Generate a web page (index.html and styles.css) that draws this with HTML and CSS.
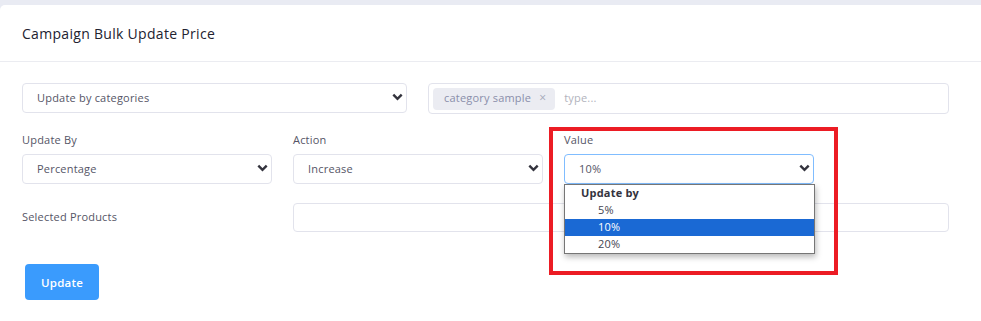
FILE: index.html
```html
<!DOCTYPE html>
<html lang="en">

<head>
    <meta charset="UTF-8">
    <meta name="viewport" content="width=device-width, initial-scale=1.0">
    <title>Campaign Bulk Update Price</title>
    <link rel="stylesheet" href="styles.css">
</head>

<body>
    <div class="card">
        <div class="card-header">
            <h5 class="card-title">Campaign Bulk Update Price</h5>
        </div>
        <div class="card-body">
            <div class="row row-top">
                <div class="select">
                    <span>Update by categories</span>
                    <svg class="chevron" viewBox="0 0 10 7"><path d="M1.2 1.3 5 5.1 8.8 1.3" /></svg>
                </div>
                <div class="tag-input">
                    <span class="tag">category sample <span class="tag-x">&times;</span></span>
                    <span class="placeholder">type...</span>
                </div>
            </div>

            <div class="row row-three">
                <div class="field">
                    <label class="label">Update By</label>
                    <div class="select">
                        <span>Percentage</span>
                        <svg class="chevron" viewBox="0 0 10 7"><path d="M1.2 1.3 5 5.1 8.8 1.3" /></svg>
                    </div>
                </div>
                <div class="field">
                    <label class="label">Action</label>
                    <div class="select">
                        <span>Increase</span>
                        <svg class="chevron" viewBox="0 0 10 7"><path d="M1.2 1.3 5 5.1 8.8 1.3" /></svg>
                    </div>
                </div>
                <div class="field">
                    <label class="label">Value</label>
                    <div class="dropdown-wrap">
                        <div class="select focused">
                            <span>10%</span>
                            <svg class="chevron" viewBox="0 0 10 7"><path d="M1.2 1.3 5 5.1 8.8 1.3" /></svg>
                        </div>
                        <ul class="dropdown">
                            <li class="group">Update by</li>
                            <li class="option">5%</li>
                            <li class="option active">10%</li>
                            <li class="option">20%</li>
                        </ul>
                    </div>
                </div>
            </div>

            <div class="row row-products">
                <label class="label">Selected Products</label>
                <div class="text-input"></div>
            </div>

            <button class="btn">Update</button>
        </div>
    </div>

    <!-- red highlight drawn over the screenshot -->
    <div class="annotation"></div>
</body>

</html>
```

FILE: styles.css
```css
* {
    box-sizing: border-box;
}

body {
    margin: 0;
    background-color: #e9ebf3;
    font-family: "Open Sans", "Liberation Sans", sans-serif;
    letter-spacing: 0.2px;
    color: #555566;
}

.card {
    margin-top: 5px;
    background-color: #ffffff;
    border-radius: 5px 0 0 0;
    height: 316px;
}

.card-header {
    height: 57px;
    padding: 0 22px;
    display: flex;
    align-items: center;
    border-bottom: 1px solid #ebecf1;
}

.card-title {
    margin: 0;
    font-size: 14px;
    font-weight: 500;
    letter-spacing: 0.3px;
    color: #222230;
}

.card-body {
    padding: 21px 32px 0 22px;
}

.row {
    display: grid;
    column-gap: 21px;
}

.row-top {
    grid-template-columns: 385px 1fr;
    margin-bottom: 18px;
}

.row-three {
    grid-template-columns: 250px 250px 250px;
    margin-bottom: 19px;
}

.row-products {
    grid-template-columns: 250px 1fr;
    align-items: center;
    margin-bottom: 32px;
}

.label {
    display: block;
    font-size: 11px;
    line-height: 16px;
    margin-bottom: 6px;
    color: #555566;
}

.row-products .label {
    margin: 0;
    padding-bottom: 2px;
}

.select {
    height: 30px;
    border: 1px solid #e2e3ec;
    border-radius: 4px;
    padding: 0 0 2px 14px;
    display: flex;
    align-items: center;
    justify-content: space-between;
    font-size: 11px;
    color: #555566;
}

.select.focused {
    border-color: #80bdff;
}

.chevron {
    width: 11px;
    height: 8px;
    margin-right: 3px;
    fill: none;
    stroke: #33333d;
    stroke-width: 2.2;
}

.tag-input {
    height: 31px;
    border: 1px solid #e2e3ec;
    border-radius: 4px;
    padding: 0 4px;
    display: flex;
    align-items: center;
    font-size: 11px;
}

.tag {
    height: 22px;
    padding: 0 9px 2px 11px;
    border-radius: 4px;
    background-color: #ebecf2;
    color: #8a8eaa;
    display: flex;
    align-items: center;
}

.tag-x {
    margin-left: 8px;
    font-size: 12px;
    color: #a4a7b8;
}

.placeholder {
    margin-left: 9px;
    padding-bottom: 2px;
    color: #b2b3bd;
}

.text-input {
    height: 29px;
    border: 1px solid #e2e3ec;
    border-radius: 4px;
}

.dropdown-wrap {
    position: relative;
}

.dropdown {
    position: absolute;
    top: 100%;
    left: 0;
    width: 251px;
    margin: 0;
    padding: 0;
    list-style: none;
    background-color: #ffffff;
    border: 1px solid #767676;
    box-shadow: 1px 3px 6px rgba(0, 0, 0, 0.28);
    font-size: 11px;
    z-index: 2;
}

.dropdown li {
    height: 17px;
    line-height: 15px;
    color: #444450;
}

.dropdown .group {
    padding-left: 16px;
    font-weight: 700;
    color: #33333d;
}

.dropdown .option {
    padding-left: 33px;
}

.dropdown .active {
    background-color: #1a69d4;
    color: #ffffff;
}

.btn {
    margin-left: 3px;
    width: 74px;
    height: 36px;
    border: none;
    border-radius: 4px;
    background-color: #3a9bfd;
    color: #ffffff;
    font-family: "Open Sans", "Liberation Sans", sans-serif;
    font-size: 11.5px;
    font-weight: 600;
    letter-spacing: 0.2px;
}

.annotation {
    position: absolute;
    left: 549px;
    top: 127px;
    width: 289px;
    height: 148px;
    border: 4px solid #ec1c24;
}
```
